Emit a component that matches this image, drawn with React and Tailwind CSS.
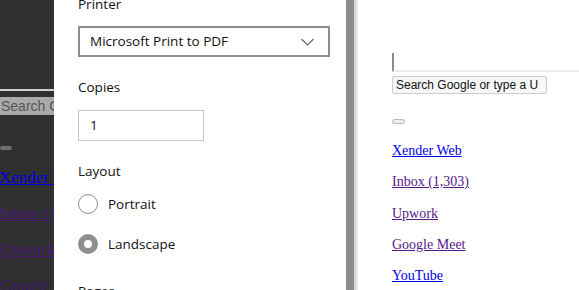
import React from "react";

const ui = { fontFamily: '"Open Sans", "Noto Sans", sans-serif' };
const serif = { fontFamily: '"Liberation Serif", serif' };
const arial = { fontFamily: '"Liberation Sans", Arial, sans-serif' };

export default function App() {
  return (
    <div className="flex h-[290px] w-[579px] overflow-hidden bg-white">
      {/* dimmed page behind the dialog */}
      <div className="flex w-[54px] shrink-0 flex-col overflow-hidden bg-[#303030]">
        <div className="h-[89px] shrink-0" />
        <div className="h-[2px] w-full shrink-0 bg-[#cfcfcf]" />
        <div className="mt-[6px] flex h-[18px] w-[80px] shrink-0 items-center whitespace-nowrap bg-[#a9a9a9] pl-[1px] text-[14px] text-[#555]" style={arial}>
          Search Google
        </div>
        <div className="mt-[31px] h-[4px] w-[12px] shrink-0 rounded-sm bg-[#6f6f6f]" />
        <div className="mt-[18px] flex flex-col gap-[17px] text-[17px] leading-[19px] whitespace-nowrap" style={serif}>
          <span className="text-[#0000e0] underline -ml-[1px]">Xender Web</span>
          <span className="text-[#4a1a78] underline">Inbox (1,303)</span>
          <span className="text-[#4a1a78] underline">Upwork</span>
          <span className="text-[#3e1766] underline">Google Meet</span>
        </div>
      </div>

      {/* print dialog panel */}
      <div className="flex w-[292px] shrink-0 flex-col bg-white pl-6 text-[#111]" style={ui}>
        <div className="-mt-[6px] text-[13.5px] leading-[20px]">Printer</div>
        <div className="mt-[12px] flex h-[31px] w-[252px] shrink-0 items-center justify-between border-2 border-[#8e8e8e] pl-[10px] pr-[14px] text-[13.5px] whitespace-nowrap">
          <span>Microsoft Print to PDF</span>
          <svg width="13" height="8" viewBox="0 0 13 8" fill="none">
            <path d="M0.5 1 L6.5 7 L12.5 1" stroke="#666" strokeWidth="1.1" />
          </svg>
        </div>
        <div className="mt-[20px] text-[13.5px] leading-[20px]">Copies</div>
        <div className="mt-[13px] flex h-[31px] w-[126px] shrink-0 items-center border border-[#c6c6c6] pl-[11px] text-[13.5px]">1</div>
        <div className="mt-[20px] text-[13.5px] leading-[20px]">Layout</div>
        <div className="mt-[13px] flex h-[20px] shrink-0 items-center gap-[10px] text-[13.5px] leading-[20px]">
          <span className="h-[20px] w-[20px] rounded-full border border-[#8a8a8a]" />
          <span>Portrait</span>
        </div>
        <div className="mt-[20px] flex h-[20px] shrink-0 items-center gap-[10px] text-[13.5px] leading-[20px]">
          <span className="h-[20px] w-[20px] rounded-full border-[6px] border-[#8f8f8f] bg-white" />
          <span>Landscape</span>
        </div>
        <div className="mt-[27px] text-[13.5px] leading-[20px]">Pages</div>
      </div>

      {/* scrollbar / divider */}
      <div className="w-[8px] shrink-0 bg-[#8c8c8c]" />
      <div className="w-[4px] shrink-0 bg-gradient-to-r from-[#cfcfcf] to-[#eeeeee]" />

      {/* live page */}
      <div className="flex min-w-0 flex-1 flex-col bg-white pl-[34px]">
        <div className="mt-[53px] h-[19px] shrink-0 border-b-2 border-l-2 border-b-[#ececec] border-l-[#8a8a8a]" />
        <div className="mt-[4px] flex h-[18px] w-[155px] shrink-0 items-center overflow-hidden whitespace-nowrap rounded-[2px] border border-[#cfcfcf] bg-[#f7f7f7] pl-[3px] text-[12px] text-[#111]" style={arial}>
          Search Google or type a U
        </div>
        <div className="mt-[25px] h-[5px] w-[13px] shrink-0 rounded-[3px] border border-[#b8b8b8] bg-[#ececec]" />
        <div className="mt-[19px] flex flex-col gap-[15px] text-[14px] leading-[16.25px] whitespace-nowrap" style={serif}>
          <span><span className="text-[#0000ee] underline">Xender Web</span></span>
          <span><span className="text-[#551a8b] underline">Inbox (1,303)</span></span>
          <span><span className="text-[#551a8b] underline">Upwork</span></span>
          <span><span className="text-[#551a8b] underline">Google Meet</span></span>
          <span><span className="text-[#0000ee] underline">YouTube</span></span>
        </div>
      </div>
    </div>
  );
}
